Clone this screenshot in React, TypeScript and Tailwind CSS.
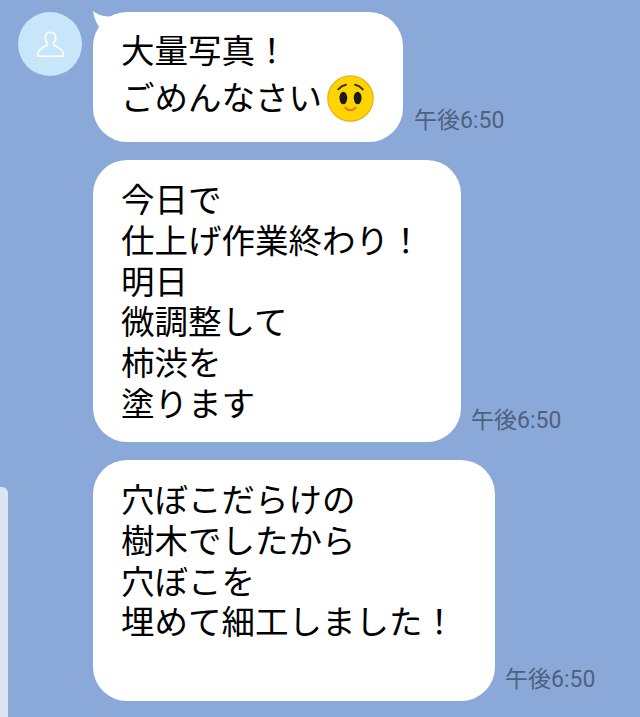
function Emoji() {
  return (
    <svg viewBox="0 0 46 46" className="ml-[5px] h-[47px] w-[47px] shrink-0 translate-y-[3px]">
      <circle cx="23" cy="23" r="22.2" fill="#ffd400" stroke="#e8b020" strokeWidth="1.2" />
      <ellipse cx="16" cy="22.5" rx="3.8" ry="6.2" fill="#1a1a1a" />
      <ellipse cx="30" cy="22.5" rx="3.8" ry="6.2" fill="#1a1a1a" />
      <path d="M11 14 Q14 10.500 18.500 9.500" fill="none" stroke="#3a3010" strokeWidth="2" strokeLinecap="round" />
      <path d="M35 14 Q32 10.500 27.500 9.500" fill="none" stroke="#3a3010" strokeWidth="2" strokeLinecap="round" />
      <path d="M18 32 Q23 37 28 32" fill="none" stroke="#e87830" strokeWidth="2" strokeLinecap="round" />
    </svg>
  );
}

function Bubble({ lines, time, className, tail, timeClass, lineClass }: { lines: React.ReactNode[]; time: string; className: string; tail?: boolean; timeClass: string; lineClass?: string }) {
  return (
    <div className="flex items-end">
      <div className={`relative rounded-[34px] bg-white pl-[28px] text-[33.5px] text-black ${lineClass ?? "leading-[40.8px]"} ${className}`}>
        {tail && (
          <svg viewBox="0 0 20 16" className="absolute left-0 top-[-1px] h-[16px] w-[20px]">
            <path d="M0 0 Q8 7 20 5 L6 16 Q1 8 0 0 Z" fill="#fff" />
          </svg>
        )}
        {lines.map((line, i) => (
          <div key={i} className="flex items-center whitespace-nowrap">
            {line}
          </div>
        ))}
      </div>
      <span
        className={`text-[23px] leading-[26px] text-[#4f6180] ${timeClass}`}
        style={{ fontFamily: 'Roboto, "Noto Sans CJK JP", sans-serif' }}
      >
        {time}
      </span>
    </div>
  );
}

export default function App() {
  return (
    <div
      className="relative h-[717px] w-[640px] overflow-hidden bg-[#8aa9d8]"
      style={{ fontFamily: '"Noto Sans CJK JP", "Noto Sans", sans-serif' }}
    >
      <div className="absolute bottom-0 left-0 top-[487px] w-[8px] rounded-tr-[6px] bg-[#dce6f2]" />
      <div className="flex gap-[11px] pl-[18px] pt-[12px]">
        <div className="flex h-[64px] w-[64px] shrink-0 items-center justify-center rounded-full bg-[#c8e6fa]">
          <svg viewBox="0 0 26 26" className="mt-[1px] h-[27px] w-[27px]" fill="none" stroke="#fff" strokeWidth="1.6" strokeLinejoin="round">
            <path d="M13 1.200c-3.200 0-5 2.400-5 5.200 0 2.200.9 3.800 1.800 5 .6.8.3 2-.6 2.500-2.400 1.300-6.600 3-7.800 6.200-.4 1.100-.5 4.200-.5 4.200h24.200s-.1-3.100-.5-4.200c-1.200-3.200-5.400-4.900-7.800-6.200-.9-.5-1.200-1.700-.6-2.500.9-1.200 1.800-2.800 1.800-5 0-2.800-1.800-5.200-5-5.200z" />
          </svg>
        </div>
        <div className="flex flex-col gap-[18px]">
          <Bubble
            tail
            lineClass="leading-[47px]"
            className="h-[130px] w-[310px] pt-[13px]"
            timeClass="mb-[8px] ml-[11px]"
            time="午後6:50"
            lines={[
              "大量写真！",
              <>
                ごめんなさい
                <Emoji />
              </>,
            ]}
          />
          <Bubble
            className="h-[282px] w-[368px] pt-[18px]"
            timeClass="mb-[8px] ml-[10px]"
            time="午後6:50"
            lines={["今日で", "仕上げ作業終わり！", "明日", "微調整して", "柿渋を", "塗ります"]}
          />
          <Bubble
            className="h-[241px] w-[402px] pt-[18px]"
            timeClass="mb-[8px] ml-[10px]"
            time="午後6:50"
            lines={["穴ぼこだらけの", "樹木でしたから", "穴ぼこを", "埋めて細工しました！"]}
          />
        </div>
      </div>
    </div>
  );
}
